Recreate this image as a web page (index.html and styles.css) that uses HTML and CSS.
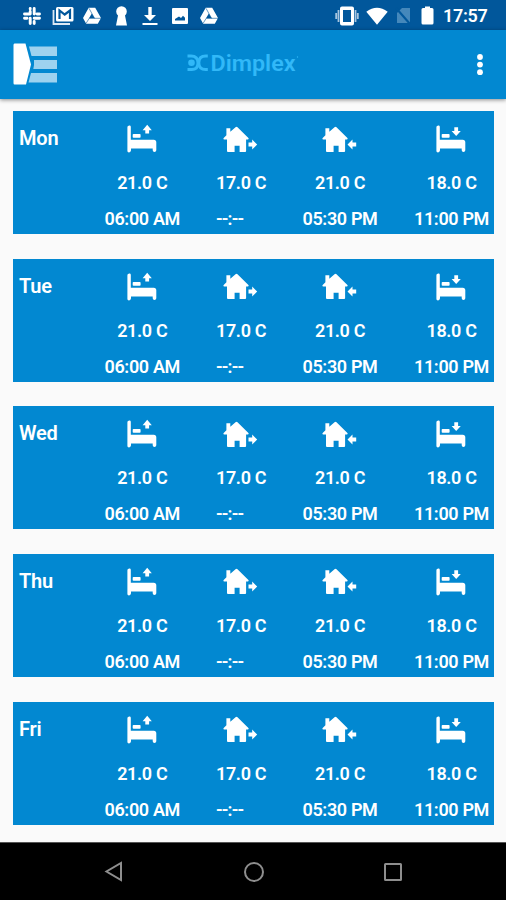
FILE: index.html
```html
<!DOCTYPE html>
<html lang="en">
<head>
<meta charset="utf-8">
<title>Dimplex</title>
<link rel="stylesheet" href="styles.css">
</head>
<body>
<svg class="sprite" aria-hidden="true">
  <symbol id="drive" viewBox="0 0 20 18"><path fill-rule="evenodd" d="M6.7.8h6.5L19 11l-3.2 5.8H4.2L1 11zM9.8 6.500 7 11.300h5.600z"/><path d="M7 1.300 12.700 11.500M19 11.300H7.200L4 16.500" class="cut"/></symbol>
  <symbol id="bed" viewBox="0 0 34 30"><path d="M2.4 3.500C2.400 1.300 5.800 .8 5.800 3v12.700h22.900q2.600 0 2.600 2.600V26c0 2.500-3.600 2.500-3.600 0v-1.500H6V26c0 3-3.600 3-3.600 1z"/><rect x="7.700" y="10" width="7.900" height="3.700" rx=".8"/></symbol>
  <symbol id="house" viewBox="0 0 26 27"><path d="M12.5 1.2q1-.8 2 0L25.4 12q.8 1.3-.7 1.4h-1.6V25q0 .9-1 .9h-5.500v-6.200h-5v6.200H5q-1 0-1-.9V13.400H1.300q-1.500-.3-.6-1.400L3.400 9.300V2.200h3.900v3.500z"/></symbol>
</svg>
<header class="status">
  <div class="notices">
    <svg width="20" height="20" viewBox="0 0 20 20" class="slack"><path d="M8.200 2.500V3M2.500 8h5.700M8.200 5.500V8M12.200 2.500v5.500M17.500 8h-2.500M17.500 12.200h-5.300M12.200 17.500v-2M8.200 17.500v-5.300M2.500 12.200H5"/></svg>
    <svg width="22" height="20" viewBox="0 0 22 20"><path d="M1.500 4v14H18" class="line"/><rect x="4" y="1" width="17.500" height="14.500" rx="1.500"/><path d="M7.500 13V4.500l5.200 4 5.300-4V13" class="mail"/></svg>
    <svg width="20" height="18"><use href="#drive"/></svg>
    <svg width="13" height="20" viewBox="0 0 13 20"><path d="M3 9.500A5.300 5.300 0 1 1 10 9.500L12 19.500H1z"/></svg>
    <svg width="16" height="20" viewBox="0 0 16 20"><path d="M6.300 1h3.400v8h4.300L8 15 2 9h4.300zM.5 17h15v2H.5z"/></svg>
    <svg width="18" height="18" viewBox="0 0 18 18"><path fill-rule="evenodd" d="M2 1h14q1 0 1 1v14q0 1-1 1H2q-1 0-1-1V2q0-1 1-1zM4 13.500h10v-2.700l-2-2-2 2.200-2-1.500-4 2.500z"/></svg>
    <svg width="20" height="18"><use href="#drive"/></svg>
  </div>
  <div class="system">
    <svg width="24" height="20" viewBox="0 0 24 20"><path fill-rule="evenodd" d="M7 .5h10q2 0 2 2v15q0 2-2 2H7q-2 0-2-2v-15q0-2 2-2zM8 4v12h8V4z"/><path d="M3.500 4v12M20.500 4v12M1.200 7v6M22.800 7v6" class="waves"/></svg>
    <svg width="22" height="18" viewBox="0 0 22 18"><path d="M.3 4.800Q11-3.300 21.700 4.800L11 17.700z"/></svg>
    <svg width="17" height="19" viewBox="0 0 17 19" class="nosim"><path d="M7 2h8v15H2V7z"/><path d="m1 2 14 16" class="slash"/></svg>
    <svg width="13" height="19" viewBox="0 0 13 19"><path d="M4 .5h5V2h2q1.500 0 1.500 1.500v13.500q0 1.500-1.500 1.500H2Q.5 18.500.5 17V3.500Q.5 2 2 2h2z"/></svg>
    <span class="clock">17:57</span>
  </div>
</header>
<div class="appbar">
  <svg class="menu" width="45" height="43" viewBox="0 0 45 43"><path d="M1.500.5h11L18 21.500l-5 20H1.500Q.5 41.500.5 40V2Q.5.500 1.500.5z"/><path d="M16 3.500h28V13H18.500zM21 17h23v9H20.300L21 22zM18 30h26v9.500H15.500z" class="pale"/></svg>
  <svg class="brand" width="112" height="30" viewBox="0 0 112 30"><path d="M.5 8h3.500q7 0 7 7t-7 6.500H.5" class="stroke"/><circle cx="4.500" cy="14.700" r="3.300"/><path d="M20.800 8h-2q-7 0-7 6.800t7 6.700h2" class="stroke"/><text x="23.500" y="23" textLength="85" lengthAdjust="spacingAndGlyphs">Dimplex</text><circle cx="110.500" cy="9" r=".7"/></svg>
  <svg class="more" width="6" height="22" viewBox="0 0 6 22"><circle cx="3" cy="3" r="2.900"/><circle cx="3" cy="10.600" r="2.900"/><circle cx="3" cy="18.200" r="2.900"/></svg>
</div>
<main class="days" id="days"></main>
<nav class="navbar">
  <svg width="20" height="22" viewBox="0 0 20 22"><path d="M17 2v17L2.500 10.500z"/></svg>
  <svg width="22" height="22" viewBox="0 0 22 22"><circle cx="11" cy="11" r="9"/></svg>
  <svg width="20" height="20" viewBox="0 0 20 20"><rect x="2" y="2" width="16" height="16" rx=".5"/></svg>
</nav>
<script src="script.js"></script>
</body>
</html>
```
FILE: styles.css
```css
* { box-sizing: border-box; }
body {
  margin: 0;
  width: 506px;
  height: 900px;
  display: flex;
  flex-direction: column;
  overflow: hidden;
  background: #fafafa;
  color: #fff;
  font-family: Roboto, "Liberation Sans", sans-serif;
  font-weight: 600;
}
svg { display: block; fill: #fff; flex: none; }
.sprite { position: absolute; width: 0; height: 0; }
.status {
  flex: none;
  height: 30px;
  padding: 1px 18px 0 22px;
  display: flex;
  justify-content: space-between;
  align-items: center;
  background: #01579b;
}
.notices { display: flex; align-items: center; gap: 9.5px; }
.notices svg:nth-child(3) { margin-left: -1px; }
.notices svg:nth-child(4) { margin: 0 5px 0 3px; }
.notices svg:nth-child(6) { margin: 0 1px 0 3px; }
.system { display: flex; align-items: center; gap: 7px; }
.system svg:nth-child(3) { margin-right: 2px; }
.slack path { fill: none; stroke: #fff; stroke-width: 2.9; stroke-linecap: round; }
.line { fill: none; stroke: #dce8f4; stroke-width: 1.8; }
.mail { fill: none; stroke: #01579b; stroke-width: 2.2; }
.cut { fill: none; stroke: #01579b; stroke-width: .6; }
.waves { fill: none; stroke: #a9c6e0; stroke-width: 1.8; }
.nosim { fill: #4588bb; }
.slash { stroke: #01579b; stroke-width: 2; }
.clock { font-size: 18px; line-height: 20px; width: 45px; margin-left: 2px; letter-spacing: -.3px; }
.appbar {
  flex: none;
  height: 69px;
  padding: 0 23px 0 13px;
  display: grid;
  grid-template-columns: 174px 1fr 6px;
  align-items: center;
  background: #0288d1;
  box-shadow: 0 1px 4px rgba(0, 0, 0, .45);
}
.pale { fill: #9dd2ef; }
.brand { fill: #31b8f8; margin-top: -4px; }
.brand text { font: 600 22.5px Roboto, sans-serif; }
.stroke { fill: none; stroke: #31b8f8; stroke-width: 3; }
.days {
  flex: 1;
  padding: 12px 12px 0 13px;
  display: flex;
  flex-direction: column;
  gap: 24.65px;
}
.day {
  flex: none;
  height: 123px;
  padding: 0 5px 0 6px;
  display: grid;
  grid-template-columns: 49px 75px 50px 75px 75px;
  column-gap: 36.5px;
  background: #0288d1;
}
.name { font-size: 20px; line-height: 24px; padding-top: 15px; letter-spacing: -.2px; }
.slot {
  display: grid;
  grid-template-rows: 55px 34px 38px;
  justify-items: center;
  align-items: center;
  font-size: 18px;
  line-height: 20px;
  letter-spacing: -.35px;
  white-space: nowrap;
}
.slot svg { margin: 1px 1px 0 0; }
.slot .unset { justify-self: start; letter-spacing: -.8px; }
.navbar {
  flex: none;
  height: 58px;
  padding: 0 103px 0 104px;
  display: flex;
  justify-content: space-between;
  align-items: center;
  background: #000;
  border-top: 1px solid #555;
}
.navbar svg { fill: none; stroke: #8e8e8e; stroke-width: 2; }
```
FILE: script.js
```js
const arrows = {
  up: '<path d="m22.200 .7 4.600 5.500h-2.700v3.300h-3.800V6.200h-2.700z"/>',
  down: '<path d="m22.200 12 4.600-5h-2.700V3.300h-3.800V7h-2.700z"/>',
  right: '<path d="M25.500 16.600h3.700v-3l5 5-5 5v-3h-3.700z"/>',
  left: '<path d="M34.200 16.600h-3.700v-3l-5 5 5 5v-3h3.700z"/>'
};
const bed = dir => `<svg width="34" height="30" viewBox="0 0 34 30"><use href="#bed" width="34" height="30"/>${arrows[dir]}</svg>`;
const house = dir => `<svg width="35" height="27" viewBox="0 0 35 27"><use href="#house" width="26" height="27"/>${arrows[dir]}</svg>`;
const slots = [
  [bed("up"), "21.0 C", "06:00 AM"],
  [house("right"), "17.0 C", "--:--"],
  [house("left"), "21.0 C", "05:30 PM"],
  [bed("down"), "18.0 C", "11:00 PM"]
];
document.getElementById("days").innerHTML = ["Mon", "Tue", "Wed", "Thu", "Fri"].map(day =>
  `<section class="day"><div class="name">${day}</div>${slots.map(([icon, temp, time]) =>
    `<div class="slot">${icon}<span>${temp}</span><span${time === "--:--" ? ' class="unset"' : ""}>${time}</span></div>`).join("")}</section>`
).join("");
```
